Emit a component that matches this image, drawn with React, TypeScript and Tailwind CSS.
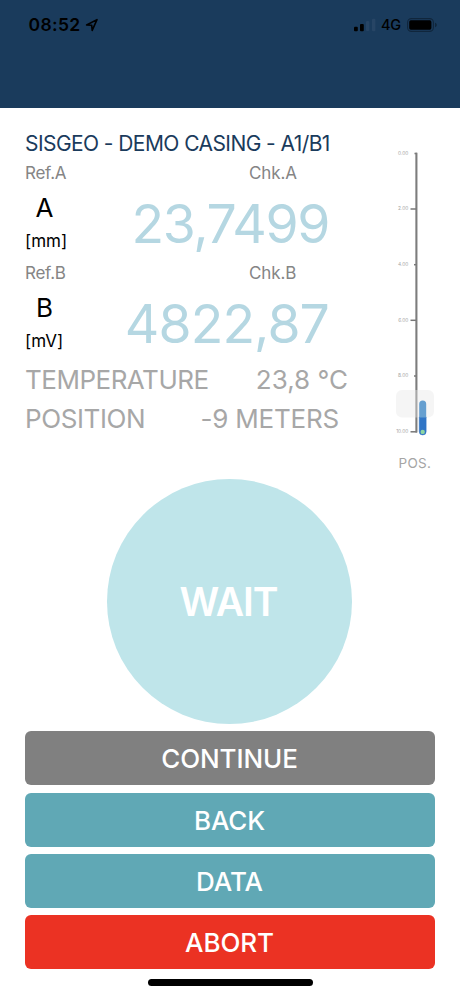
import type { ReactNode } from "react";

const depthMarks = [
  { label: "0.00", y: 5.5, from: 34.5 },
  { label: "2.00", y: 61, from: 30.5 },
  { label: "4.00", y: 116.7, from: 34 },
  { label: "6.00", y: 172.3, from: 30.5 },
  { label: "8.00", y: 228, from: 34 },
  { label: "10.00", y: 283.8, from: 30.5 },
];

const actions = [
  { label: "CONTINUE", color: "bg-[#808080]" },
  { label: "BACK", color: "bg-[#60a8b5]" },
  { label: "DATA", color: "bg-[#60a8b5]" },
  { label: "ABORT", color: "bg-[#eb3223]" },
];

function StatusBar() {
  return (
    <header className="h-[108px] shrink-0 bg-[#1a3b5c] pt-[10px] text-black">
      <div className="flex h-[30px] items-center pl-[28.5px] pr-[22px]">
        <span className="text-[17.5px] font-semibold leading-[30px] tracking-[0.35px]">08:52</span>
        <svg className="ml-[4px]" width="14" height="14" viewBox="0 0 14 14" fill="none">
          <path d="M1.6 7 12 1.6 7.2 12.3 6.7 7.3Z" stroke="currentColor" strokeWidth="1.6" strokeLinejoin="round" />
        </svg>
        <svg className="ml-auto" width="23" height="14" viewBox="0 0 23 14">
          <rect x="1" y="8.8" width="3.8" height="4.4" rx="1" fill="#000" />
          <rect x="7" y="6" width="3.8" height="7.2" rx="1" fill="#000" />
          <rect x="13" y="3" width="3.4" height="10" rx="1" fill="#274565" />
          <rect x="19" y="0.8" width="3.4" height="12.4" rx="1" fill="#274565" />
        </svg>
        <span className="ml-[5px] text-[14.5px] font-medium leading-[32px] tracking-[-0.2px]">4G</span>
        <svg className="ml-[6px]" width="31" height="14" viewBox="0 0 31 14">
          <rect x="0.6" y="0.6" width="25.8" height="12.8" rx="3.8" fill="none" stroke="#10263c" strokeWidth="1.1" />
          <rect x="2.2" y="2.3" width="22.2" height="9.4" rx="1.6" fill="#000" />
          <path d="M28 4.8c1.2.4 1.8 1.2 1.8 2.2s-.6 1.8-1.8 2.2z" fill="#10263c" />
        </svg>
      </div>
    </header>
  );
}

function Reading({ axis, unit, children }: { axis: string; unit: string; children: ReactNode }) {
  return (
    <section>
      <div className="flex h-[30px] items-center pt-[2px] text-[17px] tracking-[-0.25px] text-[#858585]">
        <span className="w-[224px]">Ref.{axis}</span>
        <span className="tracking-[-0.1px]">Chk.{axis}</span>
      </div>
      <div className="flex h-[70px] justify-between pr-[51px]">
        <div className="w-[42px] text-black">
          <div className="pr-[3px] text-center text-[26px] leading-[39px]">{axis}</div>
          <div className="text-[17px] leading-[29px]">{unit}</div>
        </div>
        {children}
      </div>
    </section>
  );
}

function DepthGauge() {
  return (
    <aside className="flex w-[60px] flex-col pt-[40px]">
      <svg width="60" height="292" viewBox="0 0 60 292">
        {depthMarks.map((m) => (
          <g key={m.label}>
            <text x="28.3" y={m.y + 1.2} textAnchor="end" fontSize="4.8" fill="#a3a3a3">
              {m.label}
            </text>
            <path d={`M${m.from} ${m.y}H37`} stroke="#777" strokeWidth="1.5" />
          </g>
        ))}
        <path d="M36.4 4.8V284.5" stroke="#7d7d7d" strokeWidth="2.1" />
        <rect x="16" y="242" width="38" height="27.5" rx="6" fill="#e6e6e6" fillOpacity="0.4" />
        <path d="M39.2 269V283.5a3.5 3.5 0 0 0 7 0V269z" fill="#3075c6" stroke="#3075c6" strokeWidth="0.4" />
        <path d="M39.2 269.5V256a3.5 3.5 0 0 1 7 0V269.5z" fill="#659fd0" />
        <circle cx="42.7" cy="283.9" r="2.2" fill="#8ed7a2" />
      </svg>
      <span className="mt-[13px] pl-[18.5px] text-[13.5px] leading-[20px] tracking-[0.3px] text-[#a5a5a5]">POS.</span>
    </aside>
  );
}

export default function App() {
  return (
    <div className="flex h-[996px] w-[460px] flex-col overflow-hidden bg-white font-['Inter',sans-serif]">
      <StatusBar />
      <div className="flex h-[370px] shrink-0">
        <main className="w-[380px] whitespace-nowrap pl-[25px] pt-[20px]">
          <h1 className="pt-px text-[21px] leading-[29px] tracking-[-0.57px] text-[#1a3b5c]">
            SISGEO - DEMO CASING - A1/B1
          </h1>
          <Reading axis="A" unit="[mm]">
            <span className="pt-px text-[53.5px] leading-[70px] tracking-[-1.4px] text-[#b5d7e2]">23,7499</span>
          </Reading>
          <Reading axis="B" unit="[mV]">
            <span className="pt-px text-[53.5px] leading-[70px] tracking-[-0.9px] text-[#b5d7e2]">4822,87</span>
          </Reading>
          <dl className="pt-[2px] text-[26px] text-[#a7a7a7]">
            <div className="flex justify-between pr-[32px] leading-[40px]">
              <dt className="tracking-[-0.5px]">TEMPERATURE</dt>
              <dd>23,8 °C</dd>
            </div>
            <div className="flex justify-between pr-[41px] leading-[38px]">
              <dt className="tracking-[-0.4px]">POSITION</dt>
              <dd className="tracking-[-0.2px]">-9 METERS</dd>
            </div>
          </dl>
        </main>
        <DepthGauge />
      </div>
      <button className="ml-[107px] mt-[0.7px] size-[245px] shrink-0 rounded-full bg-[#bfe5ea] pt-[2px] pr-[2px] text-[39px] font-semibold tracking-[-1px] text-white">
        WAIT
      </button>
      <nav className="mt-[7.6px] flex flex-col gap-[7.3px] px-[24.6px]">
        {actions.map((a) => (
          <button
            key={a.label}
            className={`h-[54px] rounded-[6px] pt-[2px] pr-px text-[26px] font-medium leading-[52px] tracking-[-0.1px] text-white ${a.color}`}
          >
            {a.label}
          </button>
        ))}
      </nav>
      <div className="ml-[148px] mt-[10.2px] h-[6.6px] w-[164.5px] shrink-0 rounded-full bg-black" />
    </div>
  );
}
